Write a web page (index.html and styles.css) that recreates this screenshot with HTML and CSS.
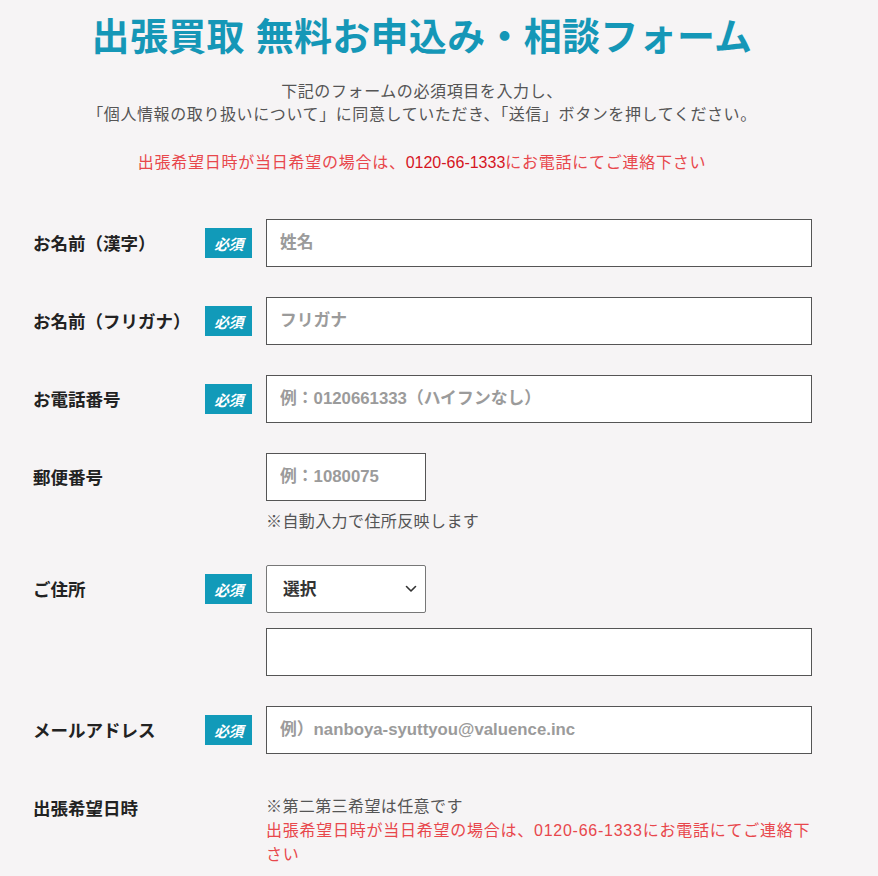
FILE: index.html
```html
<!DOCTYPE html>
<html lang="ja">
<head>
<meta charset="utf-8">
<title>出張買取 無料お申込み・相談フォーム</title>
<link rel="stylesheet" href="styles.css">
</head>
<body>
<div class="page">
  <header class="intro">
    <h1 class="title">出張買取 無料お申込み・相談フォーム</h1>
    <p class="lead">下記のフォームの必須項目を入力し、<br>「個人情報の取り扱いについて」に同意していただき、「送信」ボタンを押してください。</p>
    <p class="alert">出張希望日時が当日希望の場合は、<span class="tel">0120-66-1333</span>にお電話にてご連絡下さい</p>
  </header>

  <form class="form">
    <div class="row">
      <div class="label">お名前（漢字）</div>
      <div class="badge-cell"><span class="badge">必須</span></div>
      <div class="field"><input class="input" type="text" placeholder="姓名"></div>
    </div>
    <div class="row">
      <div class="label">お名前（フリガナ）</div>
      <div class="badge-cell"><span class="badge">必須</span></div>
      <div class="field"><input class="input" type="text" placeholder="フリガナ"></div>
    </div>
    <div class="row">
      <div class="label">お電話番号</div>
      <div class="badge-cell"><span class="badge">必須</span></div>
      <div class="field"><input class="input" type="text" placeholder="例：0120661333（ハイフンなし）"></div>
    </div>
    <div class="row">
      <div class="label">郵便番号</div>
      <div class="badge-cell"></div>
      <div class="field">
        <input class="input input-short" type="text" placeholder="例：1080075">
        <p class="note">※自動入力で住所反映します</p>
      </div>
    </div>
    <div class="row row-address">
      <div class="label">ご住所</div>
      <div class="badge-cell"><span class="badge">必須</span></div>
      <div class="field">
        <div class="select-wrap">
          <select class="select"><option>選択</option></select>
          <svg class="chevron" width="12" height="8" viewBox="0 0 12 8" aria-hidden="true"><path d="M1.5 1.5 L6 6 L10.5 1.5" fill="none" stroke="#333" stroke-width="1.6" stroke-linecap="round" stroke-linejoin="round"/></svg>
        </div>
        <input class="input input-second" type="text">
      </div>
    </div>
    <div class="row">
      <div class="label">メールアドレス</div>
      <div class="badge-cell"><span class="badge">必須</span></div>
      <div class="field"><input class="input" type="text" placeholder="例）nanboya-syuttyou@valuence.inc"></div>
    </div>
    <div class="row row-date">
      <div class="label label-top">出張希望日時</div>
      <div class="badge-cell"></div>
      <div class="field">
        <p class="note note-top">※第二第三希望は任意です</p>
        <p class="note note-red">出張希望日時が当日希望の場合は、0120-66-1333にお電話にてご連絡下さい</p>
      </div>
    </div>
  </form>
</div>
</body>
</html>
```

FILE: styles.css
```css
* { box-sizing: border-box; }

html, body {
  margin: 0;
  padding: 0;
  background: #f6f4f5;
}

body {
  font-family: "Liberation Sans", "Noto Sans CJK JP", sans-serif;
  color: #222;
}

.page {
  width: 844px;
}

.intro {
  text-align: center;
  padding-top: 12px;
}

.title {
  margin: 0;
  font-size: 38px;
  line-height: 50px;
  font-weight: 700;
  color: #1597b7;
  letter-spacing: 0.3px;
}

.lead {
  margin: 18px 0 0;
  font-size: 16px;
  line-height: 23px;
  color: #555;
  letter-spacing: 0.6px;
}

.alert {
  margin: 25px 0 0;
  font-size: 16px;
  line-height: 23px;
  color: #e8474c;
  letter-spacing: 0.75px;
}

.tel {
  color: #d5151f;
  letter-spacing: 0;
}

.form {
  margin-top: 45px;
  padding-left: 33px;
}

.row {
  display: flex;
  align-items: flex-start;
  margin-bottom: 30px;
}

.label {
  width: 172px;
  height: 48px;
  flex: none;
  padding-top: 2px;
  font-size: 17.5px;
  font-weight: 700;
  line-height: 46px;
  color: #222;
  white-space: nowrap;
}

.label-top {
  height: auto;
  padding-top: 2px;
  line-height: 24px;
}

.badge-cell {
  width: 61px;
  flex: none;
  height: 48px;
  display: flex;
  align-items: center;
}

.badge {
  display: flex;
  align-items: center;
  justify-content: center;
  width: 47px;
  height: 30px;
  background: #119ab9;
  color: #fff;
  font-size: 15px;
  font-weight: 700;
  font-style: italic;
  letter-spacing: -0.5px;
}

.field {
  width: 546px;
  flex: none;
}

.input {
  display: block;
  width: 546px;
  height: 48px;
  margin: 0;
  padding: 0 13px;
  border: 1px solid #555;
  border-radius: 0;
  background: #fff;
  font-family: "Liberation Sans", "Noto Sans CJK JP", sans-serif;
  font-size: 16.8px;
  font-weight: 700;
  color: #333;
  outline: none;
}

.input::placeholder {
  color: #9b9b9b;
  opacity: 1;
}

.input-short {
  width: 160px;
}

.input-second {
  margin-top: 15px;
}

.note {
  margin: 9px 0 0;
  font-size: 16px;
  line-height: 24px;
  color: #555;
  letter-spacing: 0.4px;
}

.note-top {
  margin-top: 0;
}

.note-red {
  margin-top: 0;
  color: #e8474c;
  letter-spacing: 0.75px;
}

.row-address {
  margin-top: 31px;
}

.row-date {
  margin-top: 41px;
}

.select-wrap {
  position: relative;
  width: 160px;
}

.select {
  display: block;
  width: 160px;
  height: 48px;
  margin: 0;
  padding: 0 16px;
  border: 1px solid #777;
  border-radius: 2px;
  background: #fff;
  -webkit-appearance: none;
  appearance: none;
  font-family: "Liberation Sans", "Noto Sans CJK JP", sans-serif;
  font-size: 16.8px;
  font-weight: 700;
  color: #333;
}

.chevron {
  position: absolute;
  right: 9px;
  top: 20px;
  pointer-events: none;
}
```
